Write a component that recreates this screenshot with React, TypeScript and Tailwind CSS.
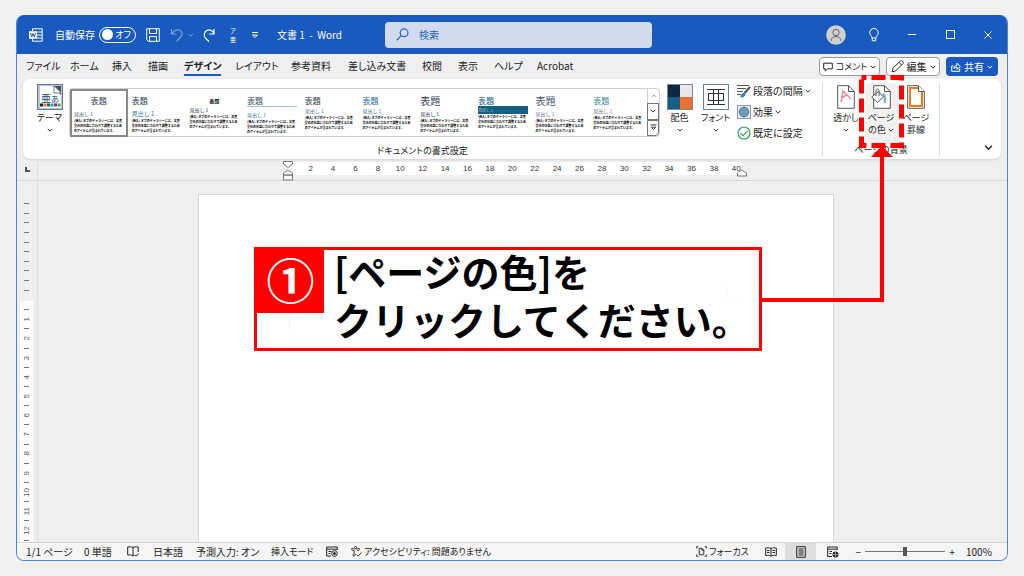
import type { ReactNode } from "react";
import { useState } from "react";

interface ThemeStyle {
  title: string;
  heading: string;
  align?: string;
  rule?: boolean;
  band?: boolean;
}

const TABS = [
  "ファイル",
  "ホーム",
  "挿入",
  "描画",
  "デザイン",
  "レイアウト",
  "参考資料",
  "差し込み文書",
  "校閲",
  "表示",
  "ヘルプ",
  "Acrobat",
];

const STYLES: ThemeStyle[] = [
  { title: "text-[8px] text-gray-700", heading: "text-[5px] text-gray-600 mt-1", align: "text-center" },
  { title: "text-[8px] text-gray-700", heading: "text-[6px] text-[#3f7390] mt-1" },
  { title: "text-[5px] text-gray-900 font-bold", heading: "text-[5px] text-gray-800", align: "text-center" },
  { title: "text-[8px] text-[#44546a]", heading: "text-[5px] text-[#2e6e93] mt-1", rule: true },
  { title: "text-[8px] text-gray-700", heading: "text-[5px] text-[#3f7390] mt-px" },
  { title: "text-[8px] text-[#2e6e93]", heading: "text-[5px] text-[#3f7390] mt-px" },
  { title: "text-[10px] text-gray-700", heading: "text-[5px] text-gray-800 mt-1" },
  { title: "text-[8px] text-[#17607f]", heading: "text-[4px] text-[#9fc4d8]", band: true },
  { title: "text-[10px] text-[#44546a]", heading: "text-[5px] text-gray-500 mt-1" },
  { title: "text-[8px] text-[#3f8a9c]", heading: "text-[5px] text-gray-500 mt-px" },
];

const BODY = "[挿入] タブのギャラリーには、文書全体の体裁に合わせて調整するためのアイテムが含まれています。";

const RULER = Array.from({ length: 20 }, (_, i) => (i + 1) * 2);
const V_MARGIN = Array.from({ length: 10 }, (_, i) => i);
const V_RULER = Array.from({ length: 25 }, (_, i) => i);

function Chevron({ className = "w-[6px] h-[6px]" }: { className?: string }) {
  return (
    <svg viewBox="0 0 8 8" className={className} fill="none" stroke="currentColor" strokeWidth="1.3">
      <path d="M1 2.5 4 5.5 7 2.5" />
    </svg>
  );
}

function WordIcon() {
  return (
    <svg viewBox="0 0 14 14" className="w-[14px] h-[14px]" fill="none" stroke="white">
      <path d="M3.5 3V.8h9.7v12.4H3.5V11M8 4h5M8 7h5M8 10h5" />
      <rect x="0" y="3.2" width="8" height="7.6" fill="white" stroke="none" />
      <path d="M1.5 5l1.2 4L4 5.5 5.3 9l1.2-4" stroke="#185abd" strokeWidth="1" />
    </svg>
  );
}

function SaveIcon() {
  return (
    <svg viewBox="0 0 14 14" className="w-[14px] h-[14px]" fill="none" stroke="white">
      <path d="M.7.7h12.6v12.6H2.2L.7 11.8zM3.5.7v4.8h7V.7M3.5 13.3V8.6h7v4.7" />
    </svg>
  );
}

function UndoIcon() {
  return (
    <svg viewBox="0 0 14 14" className="w-[14px] h-[14px]" fill="none" stroke="#7ba3dc" strokeWidth="1.2">
      <path d="M1.5 1v5h5M1.8 5.8C4 2.6 6.5 1.3 9 2c3.2.9 4 4.3 2 6.5L6.5 13.3" />
    </svg>
  );
}

function RedoIcon() {
  return (
    <svg viewBox="0 0 14 14" className="w-[14px] h-[14px]" fill="none" stroke="white" strokeWidth="1.2">
      <path d="M12 1v5H7.2M12 5.5A5 5 0 1 0 3.4 10.2L7 13.5" />
    </svg>
  );
}

function SearchIcon() {
  return (
    <svg viewBox="0 0 14 14" className="w-[13px] h-[13px]" fill="none" stroke="#2b62b5" strokeWidth="1.3">
      <circle cx="8.7" cy="5.2" r="4.2" />
      <path d="M5.7 8.2.8 13.2" />
    </svg>
  );
}

function ThemeIcon() {
  return (
    <svg viewBox="0 0 26 26" className="w-[26px] h-[26px]">
      <rect x=".5" y=".5" width="25" height="25" fill="#b8c4d4" stroke="#66788f" />
      <path d="M3 2h14l7 7v15H3z" fill="white" />
      <path d="M16 2h8v9z" fill="#44546a" />
      <path d="M17 2v7h7" fill="#fff" stroke="#44546a" strokeWidth=".8" />
      <text x="4" y="18" fontSize="10" fill="#1f4e79">
        亜
      </text>
      <text x="14" y="18" fontSize="8" fill="#1f4e79">
        あ
      </text>
      <g>
        <rect x="3" y="19.5" width="3" height="3" fill="#0e2841" />
        <rect x="6.5" y="19.5" width="3" height="3" fill="#e97132" />
        <rect x="10" y="19.5" width="3" height="3" fill="#196b24" />
        <rect x="13.5" y="19.5" width="3" height="3" fill="#0f9ed5" />
        <rect x="17" y="19.5" width="3" height="3" fill="#a02b93" />
        <rect x="20.5" y="19.5" width="3" height="3" fill="#4ea72e" />
      </g>
    </svg>
  );
}

function ColorsIcon() {
  return (
    <svg viewBox="0 0 26 26" className="w-[26px] h-[26px]">
      <rect width="13" height="13" fill="#0e2841" />
      <rect x="13" width="13" height="13" fill="#e8e8e8" />
      <rect y="13" width="13" height="13" fill="#156082" />
      <rect x="13" y="13" width="13" height="13" fill="#e97132" />
      <rect x=".5" y=".5" width="25" height="25" fill="none" stroke="#7d8896" />
    </svg>
  );
}

function FontsIcon() {
  return (
    <svg viewBox="0 0 26 26" className="w-[26px] h-[26px]" fill="none">
      <rect x=".5" y=".5" width="25" height="25" stroke="#6d7f9c" />
      <path d="M4 5.5h18M4 20.5h18M10.5 5.5v15M15.5 5.5v15M5.5 9.5h15v7h-15z" stroke="#333" strokeWidth="1.1" />
    </svg>
  );
}

function SpacingIcon() {
  return (
    <svg viewBox="0 0 14 14" className="w-[14px] h-[14px]" fill="none" stroke="#555">
      <path d="M0 1.5h12M0 4.5h9M0 7.5h6M0 10.5h4" />
      <path d="M13 3 7.5 9" strokeWidth="2.2" />
      <path d="M8 8.5 5 9.5 3 13.5c3 0 5-.5 5.5-4z" fill="#2b7cd3" stroke="none" />
    </svg>
  );
}

function EffectsIcon() {
  return (
    <svg viewBox="0 0 14 14" className="w-[14px] h-[14px]">
      <rect x=".5" y=".5" width="13" height="13" fill="#eef2f7" stroke="#8695ab" />
      <circle cx="7" cy="7" r="4.8" fill="#6f9dc0" stroke="#41719c" />
    </svg>
  );
}

function CheckIcon() {
  return (
    <svg viewBox="0 0 14 14" className="w-[14px] h-[14px]" fill="none" stroke="#2f9e5b" strokeWidth="1.2">
      <circle cx="7" cy="7" r="6" />
      <path d="M3.5 7.2 6 9.7l4.7-4.9" />
    </svg>
  );
}

function WatermarkIcon() {
  return (
    <svg viewBox="0 0 18 24" className="w-[18px] h-[24px]" fill="none" stroke="#555">
      <path d="M.7.7h10.8l5.8 5.8v16.8H.7zM11.5.7v5.8h5.8" />
      <path d="M4 17 6 6l8 8M5.2 12.5 9.5 10" stroke="#f08c98" strokeWidth="1.5" />
    </svg>
  );
}

function PageColorIcon() {
  return (
    <svg viewBox="0 0 20 24" className="w-[20px] h-[24px]" fill="none" stroke="#555">
      <path d="M2.7.7h10.8l5.8 5.8v16.8H2.7z" fill="white" />
      <path d="M13.5.7v5.8h5.8" />
      <path d="M11.5 9c3 .5 2.5 5 2.2 9" stroke="#6fb1e8" strokeWidth="2.2" />
      <path d="M7.5 6.5 12.5 12l-6 5.5L.7 12z" fill="white" />
      <path d="M5 11V5.5c0-2 3-2 3 0V11" />
    </svg>
  );
}

function PageBorderIcon() {
  return (
    <svg viewBox="0 0 18 24" className="w-[18px] h-[24px]" fill="none" stroke="#555">
      <path d="M.7.7h10.8l5.8 5.8v16.8H.7z" />
      <path d="M3 3h9l3 3.5V21H3z" stroke="#e8801a" strokeWidth="2" />
      <path d="M11.5.7v5.8h5.8" fill="white" />
    </svg>
  );
}

function RibbonButton({
  icon,
  label,
  second,
  arrow = true,
  active,
}: {
  icon: ReactNode;
  label: string;
  second?: string;
  arrow?: boolean;
  active?: boolean;
}) {
  return (
    <button
      type="button"
      className={`flex flex-col items-center w-[33px] h-[60px] shrink-0 rounded whitespace-nowrap text-[9px] ${active ? "bg-[#f1f1f1]" : ""}`}
    >
      <span className="h-[28px] flex items-center">{icon}</span>
      <span className="leading-[13px]">{label}</span>
      <span className="flex items-center justify-center gap-[2px] h-[12px] leading-[12px]">
        {second}
        {arrow && <Chevron />}
      </span>
    </button>
  );
}

function StyleThumb({ item, selected, onClick }: { item: ThemeStyle; selected: boolean; onClick: () => void }) {
  return (
    <button
      type="button"
      onClick={onClick}
      className={`flex flex-col min-w-0 h-full text-left px-[2px] pt-1 border-2 [font-feature-settings:normal] ${selected ? "border-[#8a8a8a]" : "border-transparent"}`}
    >
      <span className={`block w-full shrink-0 leading-[11px] ${item.title} ${item.align ?? ""} ${item.rule ? "border-b border-[#9cc3d5]" : ""}`}>
        表題
      </span>
      <span className={`block w-full shrink-0 leading-[8px] ${item.heading} ${item.band ? "bg-[#156082]" : ""}`}>見出し 1</span>
      <span className="block text-[3px] leading-[5px] font-bold text-black mt-px">{BODY}</span>
    </button>
  );
}

function TitleBar() {
  const [autoSave, setAutoSave] = useState(false);

  return (
    <header className="flex items-center h-[39px] shrink-0 bg-[#185abd] text-white">
      <div className="flex items-center w-[368px] shrink-0 pl-3">
        <WordIcon />
        <span id="autosave" className="ml-3 w-[44px]">
          自動保存
        </span>
        <button
          type="button"
          role="switch"
          aria-checked={autoSave}
          aria-labelledby="autosave"
          onClick={() => setAutoSave(!autoSave)}
          className="flex items-center justify-between w-[37px] h-[16px] rounded-full border border-white pl-[2px] pr-1 text-[9px]"
        >
          <span className="w-[11px] h-[11px] rounded-full bg-white" />
          オフ
        </button>
        <button type="button" aria-label="上書き保存" className="ml-[10px]">
          <SaveIcon />
        </button>
        <button type="button" aria-label="元に戻す" className="ml-[10px] flex items-center gap-1 text-[#7ba3dc]">
          <UndoIcon />
          <Chevron />
        </button>
        <button type="button" aria-label="やり直し" className="ml-2">
          <RedoIcon />
        </button>
        <button type="button" className="ml-[14px] flex flex-col text-[6px] leading-[9px]">
          <span>ア</span>
          <span>亜</span>
        </button>
        <button type="button" aria-label="ツールバーのカスタマイズ" className="ml-[15px]">
          <svg viewBox="0 0 8 8" className="w-[8px] h-[8px]" fill="none" stroke="currentColor">
            <path d="M1 1.5h6M1.5 4 4 6.5 6.5 4z" />
          </svg>
        </button>
        <h1 className="ml-[18px] whitespace-pre">{"文書 1  -  Word"}</h1>
      </div>

      <label className="flex items-center w-[267px] h-[26px] rounded-sm bg-[#d0dcee] pl-[11px] gap-[10px]">
        <SearchIcon />
        <input
          type="search"
          placeholder="検索"
          aria-label="検索"
          className="flex-1 min-w-0 bg-transparent outline-none text-[#2b62b5] placeholder:text-[#2b62b5]"
        />
      </label>

      <div className="flex ml-auto">
        <button type="button" aria-label="アカウント" className="flex w-[38px] justify-center">
          <svg viewBox="0 0 20 20" className="w-[20px] h-[20px]" fill="none" stroke="#666">
            <circle cx="10" cy="10" r="9.8" fill="#d0d0d0" stroke="none" />
            <circle cx="10" cy="7.5" r="3.2" />
            <path d="M5 16c0-6 10-6 10 0" />
          </svg>
        </button>
        <button type="button" aria-label="ヒント" className="flex w-[38px] items-center justify-center">
          <svg viewBox="0 0 10 14" className="w-[10px] h-[14px]" fill="none" stroke="white">
            <path d="M3.2 10C3 8 .7 7.5.7 4.8a4.3 4.3 0 0 1 8.6 0C9.3 7.5 7 8 6.8 10zM3.2 10v2.8h3.6V10" />
          </svg>
        </button>
        <button type="button" aria-label="最小化" className="flex w-[38px] items-center justify-center">
          <span className="w-2 h-px bg-white" />
        </button>
        <button type="button" aria-label="最大化" className="flex w-[38px] items-center justify-center">
          <span className="w-[9px] h-[9px] border border-white" />
        </button>
        <button type="button" aria-label="閉じる" className="flex w-[38px] items-center justify-center">
          <svg viewBox="0 0 8 8" className="w-2 h-2" stroke="white">
            <path d="M.5.5l7 7M7.5.5l-7 7" />
          </svg>
        </button>
      </div>
    </header>
  );
}

function TabRow() {
  const [current, setCurrent] = useState("デザイン");

  return (
    <div className="flex items-center justify-between h-[25px] shrink-0 px-[9px]">
      <nav className="grid grid-cols-[44px_42px_36px_36px_51px_56px_57px_74px_36px_36px_43px_auto] whitespace-nowrap">
        {TABS.map((tab) => (
          <button
            key={tab}
            type="button"
            onClick={() => setCurrent(tab)}
            className={`justify-self-start h-[19px] border-b-2 ${tab === current ? "font-bold border-[#185abd]" : "border-transparent"}`}
          >
            {tab}
          </button>
        ))}
      </nav>
      <div className="flex gap-[6px] whitespace-nowrap">
        <button type="button" className="flex items-center justify-center gap-[3px] w-[61px] h-[19px] rounded border border-[#9a9a9a] bg-white text-[9px]">
          <svg viewBox="0 0 10 10" className="w-[10px] h-[10px]" fill="none" stroke="currentColor">
            <path d="M.7 1.2h8.6v5.6H4.5L2.2 9V6.8H.7z" />
          </svg>
          コメント
          <Chevron />
        </button>
        <button type="button" className="flex items-center justify-center gap-[3px] w-[54px] h-[19px] rounded border border-[#9a9a9a] bg-white">
          <svg viewBox="0 0 12 12" className="w-[13px] h-[13px]" fill="none" stroke="currentColor" strokeWidth=".9">
            <path d="M1 11l.9-3.5L8.7.9c1.4-1 3.3.9 2.4 2.4L4.4 10zM7.5 2.2l2.3 2.3" />
          </svg>
          編集
          <Chevron />
        </button>
        <button type="button" className="flex items-center justify-center gap-[3px] w-[52px] h-[19px] rounded bg-[#185abd] text-white">
          <svg viewBox="0 0 10 10" className="w-[10px] h-[10px]" fill="none" stroke="currentColor">
            <path d="M2.5 4H.7v5.3h8V6.5M3 6.5c0-2 1.2-3 3-3V1.2l3.3 3.3L6 7.5V5.2c-1.5 0-2.5.3-3 1.3z" />
          </svg>
          共有
          <Chevron />
        </button>
      </div>
    </div>
  );
}

function Ribbon() {
  const [style, setStyle] = useState(0);

  return (
    <section className="flex h-[80px] shrink-0 mx-[6px] pt-1 rounded-[7px] bg-white shadow-sm">
      <div className="flex flex-col w-[799px] shrink-0">
        <div className="flex gap-[3px] h-[62px] pl-[10px]">
          <RibbonButton icon={<ThemeIcon />} label="テーマ" />
          <div className="flex w-[591px] h-[49px] mt-[5px] border border-[#d0d0d0] rounded">
            <div className="grid grid-cols-10 flex-1 min-w-0">
              {STYLES.map((item, i) => (
                <StyleThumb key={i} item={item} selected={i === style} onClick={() => setStyle(i)} />
              ))}
            </div>
            <div className="flex flex-col w-[12px]">
              <button type="button" aria-label="前の行" className="flex flex-1 items-center justify-center border-l border-[#d0d0d0] text-gray-400">
                <Chevron className="w-[6px] h-[6px] rotate-180" />
              </button>
              <button type="button" aria-label="次の行" className="flex flex-1 items-center justify-center border border-[#777]">
                <Chevron />
              </button>
              <button type="button" aria-label="その他" className="flex flex-1 items-center justify-center border border-[#777] rounded-br">
                <svg viewBox="0 0 8 8" className="w-[7px] h-[7px]" fill="none" stroke="currentColor">
                  <path d="M.5 1h7M1.5 3.5 4 6.5l2.5-3z" />
                </svg>
              </button>
            </div>
          </div>
          <RibbonButton icon={<ColorsIcon />} label="配色" />
          <RibbonButton icon={<FontsIcon />} label="フォント" />
          <div className="flex flex-col gap-px -mt-[2px] pl-[2px] whitespace-nowrap">
            <button type="button" className="flex items-center gap-[2px] h-5">
              <SpacingIcon />
              段落の間隔
              <Chevron />
            </button>
            <button type="button" className="flex items-center gap-[2px] h-5">
              <EffectsIcon />
              効果
              <Chevron />
            </button>
            <button type="button" className="flex items-center gap-[2px] h-5">
              <CheckIcon />
              既定に設定
            </button>
          </div>
        </div>
        <h2 className="text-center text-[9px] leading-[12px]">ドキュメントの書式設定</h2>
      </div>
      <div className="flex flex-col w-[118px] h-[73px] shrink-0 border-x border-[#dcdcdc]">
        <div className="flex justify-center gap-[2px] h-[62px]">
          <RibbonButton icon={<WatermarkIcon />} label="透かし" />
          <RibbonButton icon={<PageColorIcon />} label="ページ" second="の色" active />
          <RibbonButton icon={<PageBorderIcon />} label="ページ" second="罫線" arrow={false} />
        </div>
        <h2 className="text-center text-[9px] leading-[12px]">ページの背景</h2>
      </div>
      <button type="button" aria-label="リボンを折りたたむ" className="self-end ml-auto mr-2 mb-[7px]">
        <Chevron className="w-[9px] h-[9px]" />
      </button>
    </section>
  );
}

function HorizontalRuler() {
  return (
    <div className="flex h-[22px] shrink-0 border-b border-[#d6d6d6]">
      <div className="flex w-[21px] shrink-0 justify-center pt-2 border-r border-[#dcdcdc]">
        <span className="w-[5px] h-[5px] border-l-2 border-b-2 border-[#555]" />
      </div>
      <div className="flex flex-1 justify-center pr-4">
        <div className="relative w-[454px] h-[13px] mt-[3px] bg-white">
          <div className="grid grid-cols-20 w-[448px] ml-[12px] text-center text-[8px] leading-[13px] text-[#333] font-['Liberation_Sans',sans-serif]">
            {RULER.map((n) => (
              <span key={n}>{n}</span>
            ))}
          </div>
          <svg viewBox="0 0 10 20" className="absolute -left-[5px] -top-px w-[10px] h-[20px]" fill="white" stroke="#777">
            <path d="M.5.5h9V3L5 6.5.5 3zM.5 14V12L5 9l4.5 3v2zM.5 14h9v5h-9z" />
          </svg>
          <svg viewBox="0 0 10 8" className="absolute -right-[5px] top-[7px] w-[10px] h-[8px]" fill="white" stroke="#777">
            <path d="M.5 7V4L4 .8 9.5 4v3z" />
          </svg>
        </div>
      </div>
    </div>
  );
}

function VerticalRuler() {
  return (
    <div className="flex flex-col w-[21px] shrink-0 overflow-hidden border-r border-[#dcdcdc] pl-[3px]">
      <div className="flex flex-col h-[96px] mt-[18px] shrink-0 w-[13px]">
        {V_MARGIN.map((n) => (
          <span key={n} className="flex flex-1 items-center justify-center">
            <span className="w-[5px] h-px bg-[#777]" />
          </span>
        ))}
      </div>
      <div className="mt-[6px] w-[13px] bg-white pt-1">
        <div className="flex flex-col h-[240px] text-[8px] leading-[13px] text-[#555] font-['Liberation_Sans',sans-serif]">
          {V_RULER.map((n) => (
            <span key={n} className="flex flex-1 min-h-0 items-center justify-center">
              {n % 2 === 0 ? (
                <span className="w-[5px] h-px bg-[#777]" />
              ) : (
                <span className="[writing-mode:vertical-rl] rotate-180">{(n + 1) / 2}</span>
              )}
            </span>
          ))}
        </div>
      </div>
    </div>
  );
}

function StatusBar() {
  const [zoom, setZoom] = useState(100);

  return (
    <footer className="flex items-center justify-between h-[18px] shrink-0 border-t border-[#d6d6d6] bg-[#f5f5f5] pl-[9px] whitespace-nowrap">
      <div className="grid grid-cols-[58px_43px_26px_43px_75px_55px_25px_auto] items-center">
        <span>1/1 ページ</span>
        <span>0 単語</span>
        <svg viewBox="0 0 12 11" className="w-[12px] h-[11px]" fill="none" stroke="currentColor">
          <path d="M6 1.5C4.5.7 2.5.7.7 1v8c2-.3 4-.3 5.3 1zM6 1.5C7.5.7 9 .7 11.2 1v5M6 10l1.5-1M8 9l1.2 1.2L11.5 7.5" />
        </svg>
        <span>日本語</span>
        <span>予測入力: オン</span>
        <span className="text-[9px]">挿入モード</span>
        <svg viewBox="0 0 12 11" className="w-[12px] h-[11px]" fill="none" stroke="currentColor">
          <path d="M5 10H.7V1h10.5v3M.7 3.2h10.5M2.5 5.5h3M2.5 7.5h2" />
          <circle cx="8.5" cy="7.5" r="2.8" />
          <circle cx="8.5" cy="7.5" r="1" fill="currentColor" />
        </svg>
        <span className="flex items-center gap-[2px] text-[9px]">
          <svg viewBox="0 0 12 12" className="w-[11px] h-[11px]" fill="none" stroke="currentColor">
            <circle cx="5" cy="1.8" r="1.2" />
            <path d="M3.8 3.5 1.5 2.7C.3 2.6.2 4 1.2 4.4l2.3.9v2L2.3 10c-.2 1.3 1.2 1.5 1.7.6l1-2M6.2 3.5l2.3-.8c1.2-.1 1.3 1.3.3 1.7L6.8 5.2" />
            <path d="M6 9.2l1.8 1.8L11.5 7" />
          </svg>
          アクセシビリティ: 問題ありません
        </span>
      </div>
      <div className="flex items-center h-full">
        <button type="button" className="flex items-center gap-[2px] w-[60px] text-[9px]">
          <svg viewBox="0 0 12 12" className="w-[11px] h-[11px]" fill="none" stroke="currentColor">
            <path d="M3.5 2.5h3l2 2v5h-5zM6.5 2.5v2h2M2.5.7H.7v2M9.5.7h1.8v2M2.5 11.3H.7v-2M9.5 11.3h1.8v-2" />
          </svg>
          フォーカス
        </button>
        <button type="button" aria-label="閲覧モード" className="flex h-full w-[29px] items-center justify-center">
          <svg viewBox="0 0 12 10" className="w-[12px] h-[10px]" fill="none" stroke="currentColor">
            <path d="M6 1.5C4.5.7 2.5.7.7 1v7.5c2-.3 4-.3 5.3.7 1.3-1 3.3-1 5.3-.7V1C9.5.7 7.5.7 6 1.5zM6 1.5v7.7M2 3.5h2.5M2 5.5h2.5M7.5 3.5H10M7.5 5.5H10" />
          </svg>
        </button>
        <button type="button" aria-label="印刷レイアウト" className="flex h-full w-[31px] items-center justify-center bg-[#dedede]">
          <svg viewBox="0 0 10 12" className="w-[10px] h-[12px]" fill="none" stroke="currentColor">
            <path d="M.7.7h8.6v10.6H.7zM2.5 3h5M2.5 5h5M2.5 7h5M2.5 9h5" />
          </svg>
        </button>
        <button type="button" aria-label="Web レイアウト" className="flex h-full w-[34px] items-center justify-center">
          <svg viewBox="0 0 12 12" className="w-[12px] h-[12px]" fill="none" stroke="currentColor">
            <path d="M5 10.5H.7V1h9.5v3M.7 3.2h9.5M2.5 5.5h2.5M2.5 7.5h2" />
            <circle cx="8.5" cy="8.5" r="3" fill="currentColor" stroke="none" />
            <path d="M5.5 8.5h6M8.5 5.5v6" stroke="#ddd" strokeWidth=".6" />
          </svg>
        </button>
        <button type="button" aria-label="縮小" className="w-[15px] text-right pr-1">
          −
        </button>
        <input
          type="range"
          min={10}
          max={190}
          value={zoom}
          onChange={(e) => setZoom(Number(e.target.value))}
          aria-label="ズーム"
          className="w-[80px] h-3 appearance-none bg-[linear-gradient(#777,#777)] bg-[length:100%_1px] bg-center bg-no-repeat [&::-webkit-slider-thumb]:appearance-none [&::-webkit-slider-thumb]:w-1 [&::-webkit-slider-thumb]:h-[9px] [&::-webkit-slider-thumb]:bg-[#555]"
        />
        <button type="button" aria-label="拡大" className="w-[14px]">
          +
        </button>
        <span className="w-[48px] pl-[7px]">{zoom}%</span>
      </div>
    </footer>
  );
}

function Callout() {
  return (
    <>
      <svg viewBox="0 0 160 240" className="absolute left-[758px] top-[70px] w-[160px] h-[240px] pointer-events-none" fill="none" stroke="#ff0000">
        <rect x="103.5" y="7.5" width="40" height="68" strokeWidth="5" strokeDasharray="14 5" strokeDashoffset="9" />
        <path d="M3 230h121V82" strokeWidth="4" />
        <path d="M124 76l11 11h-22z" fill="#ff0000" stroke="none" />
      </svg>
      <div className="absolute left-[254px] top-[247px] flex items-start w-[508px] h-[104px] border-[3px] border-[#ff0000] bg-white/90">
        <span className="flex items-center justify-center w-[67px] h-[63px] pb-2 shrink-0 bg-[#ff0000] text-white text-[48px] leading-none font-bold">
          ①
        </span>
        <p className="-mt-[3px] pl-[10px] text-[38px] leading-[48px] font-bold text-black whitespace-nowrap">
          [ページの色]を
          <br />
          クリックしてください。
        </p>
      </div>
    </>
  );
}

export default function App() {
  return (
    <div className="relative flex h-screen bg-[#f1f1f1] px-4 py-[15px] text-[10px] leading-[14px] text-[#222] font-['Noto_Sans_CJK_JP',sans-serif]">
      <div className="flex flex-col flex-1 min-w-0 overflow-hidden rounded-lg border border-t-0 border-[#4a86d8] bg-[#efefef] [font-feature-settings:'palt']">
        <TitleBar />
        <TabRow />
        <Ribbon />
        <HorizontalRuler />
        <main className="flex flex-1 min-h-0">
          <VerticalRuler />
          <div className="flex flex-1 min-w-0 justify-center pt-[13px] pr-[14px]">
            <article className="w-[636px] pt-[104px] px-[90px] bg-white border border-b-0 border-[#d6d6d6]">
              <div className="flex justify-between">
                <span className="w-px h-[31px] bg-gray-500" />
                <span className="w-4 h-4 -mt-4 border-l border-b border-gray-300" />
              </div>
            </article>
          </div>
        </main>
        <StatusBar />
      </div>
      <Callout />
    </div>
  );
}
